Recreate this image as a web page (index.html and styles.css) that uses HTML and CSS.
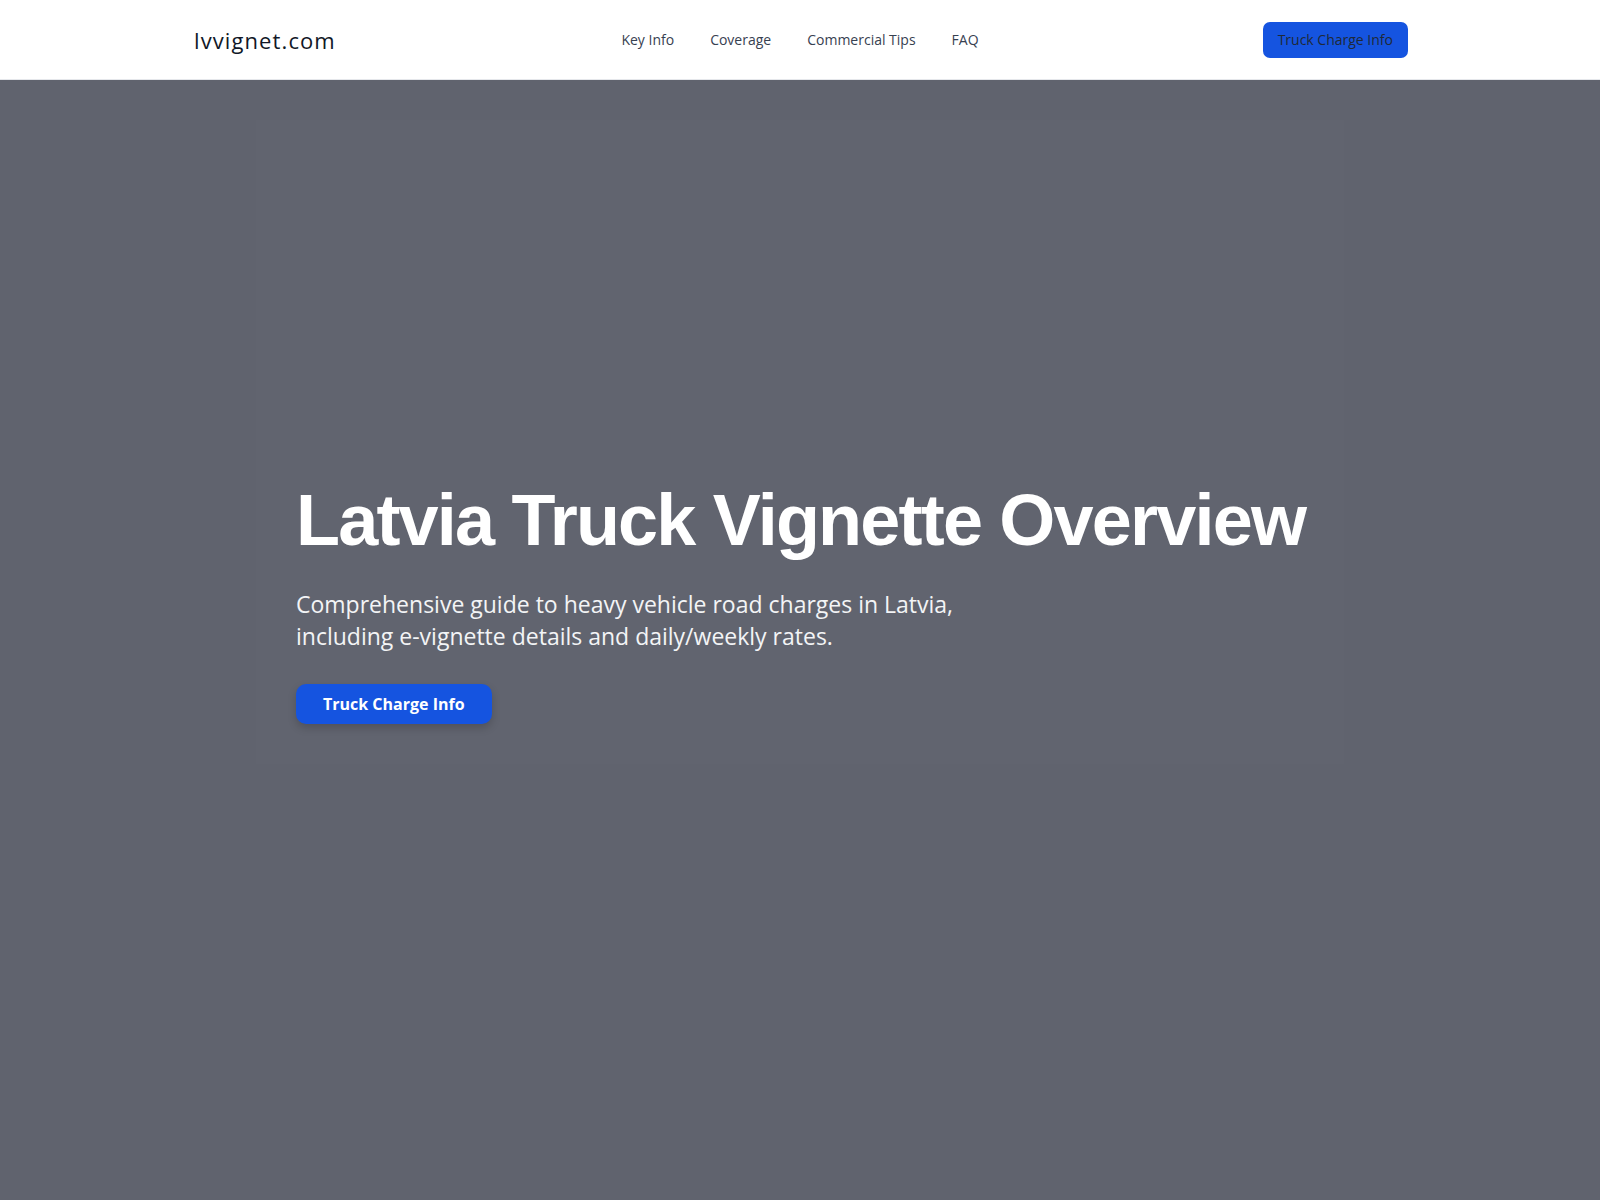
FILE: index.html
```html
<!DOCTYPE html>
<html lang="en">
<head>
<meta charset="utf-8">
<title>lvvignet.com – Latvia Truck Vignette Overview</title>
<link rel="stylesheet" href="styles.css">
</head>
<body>
<header class="site-header">
  <div class="header-inner">
    <a class="logo" href="#">lvvignet.com</a>
    <nav class="main-nav">
      <a href="#">Key Info</a>
      <a href="#">Coverage</a>
      <a href="#">Commercial Tips</a>
      <a href="#">FAQ</a>
    </nav>
    <a class="header-btn" href="#">Truck Charge Info</a>
  </div>
</header>
<main class="hero">
  <div class="hero-box">
    <h1 class="hero-title">Latvia Truck Vignette Overview</h1>
    <p class="hero-sub">Comprehensive guide to heavy vehicle road charges in Latvia,<br>including e-vignette details and daily/weekly rates.</p>
    <div class="hero-actions">
      <a class="hero-btn" href="#">Truck Charge Info</a>
    </div>
  </div>
</main>
</body>
</html>
```
FILE: styles.css
```css
* { box-sizing: border-box; }
html, body { margin: 0; padding: 0; }
body {
  font-family: "Open Sans", "Noto Sans", sans-serif;
  background: #60636e;
  min-height: 1200px;
}
a { text-decoration: none; }

.site-header {
  background: #ffffff;
  border-bottom: 1px solid #e5e7eb;
  height: 80px;
}
.header-inner {
  max-width: 1280px;
  margin: 0 auto;
  padding: 0 32px;
  height: 79px;
  display: grid;
  grid-template-columns: 1fr auto 1fr;
  align-items: center;
}
.logo {
  font-family: "Open Sans", sans-serif;
  font-size: 22px;
  font-weight: 400;
  color: #111827;
  justify-self: start;
  letter-spacing: 1.1px;
  padding-left: 2px;
}
.main-nav {
  display: flex;
  gap: 36px;
}
.main-nav a {
  font-size: 14px;
  color: #374151;
}
.header-btn {
  justify-self: end;
  background: #1554e0;
  color: #1f2937;
  font-size: 14px;
  height: 36px;
  line-height: 36px;
  padding: 0 15px;
  border-radius: 7px;
}

.hero {
  height: 1120px;
  padding-top: 40px;
  background: #60636e;
}
.hero-box {
  max-width: 1088px;
  height: 644px;
  margin: 0 auto;
  padding: 0 40px 40px;
  display: flex;
  flex-direction: column;
  justify-content: flex-end;
  background: #61646f;
}
.hero-title {
  margin: 0 0 28px;
  font-family: "Liberation Sans", Arial, sans-serif;
  font-weight: 700;
  font-size: 72px;
  line-height: 1.1;
  letter-spacing: -0.025em;
  white-space: nowrap;
  color: #ffffff;
}
.hero-sub {
  margin: 0 0 32px;
  font-size: 23px;
  line-height: 32px;
  font-weight: 400;
  color: #f3f4f6;
}
.hero-actions {
  display: flex;
}
.hero-btn {
  display: inline-block;
  background: #1554e0;
  color: #ffffff;
  font-weight: 700;
  font-size: 16px;
  line-height: 20px;
  padding: 10px 27px;
  border-radius: 10px;
  box-shadow: 0 4px 8px rgba(0,0,0,0.18);
}
```
